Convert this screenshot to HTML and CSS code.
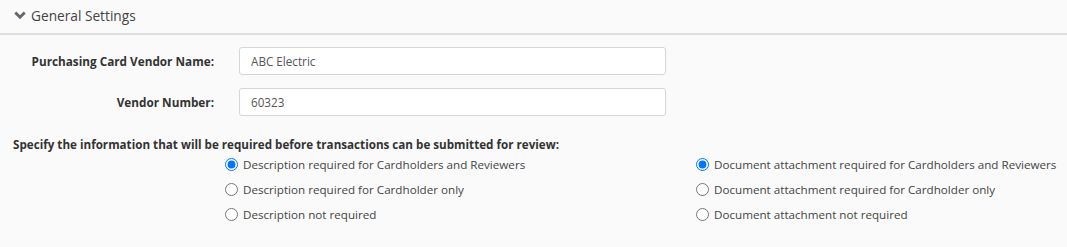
FILE: index.html
```html
<!DOCTYPE html>
<html>
<head>
<meta charset="utf-8">
<link rel="stylesheet" href="styles.css">
</head>
<body>
<div class="panel">
  <div class="panel-header">
    <svg class="chev" width="12" height="9" viewBox="0 0 12 9"><path d="M1.3 1.6 L6 6.3 L10.7 1.6" fill="none" stroke="#666" stroke-width="2.8" stroke-linejoin="miter"/></svg>
    <span class="title">General Settings</span>
  </div>
  <div class="panel-body">
    <div class="field">
      <label class="field-label">Purchasing Card Vendor Name:</label>
      <input class="field-input" type="text" value="ABC Electric">
    </div>
    <div class="field">
      <label class="field-label">Vendor Number:</label>
      <input class="field-input" type="text" value="60323">
    </div>
    <div class="spec">Specify the information that will be required before transactions can be submitted for review:</div>
    <div class="options">
      <div class="opt-col">
        <label class="opt"><input type="radio" name="desc" checked><span>Description required for Cardholders and Reviewers</span></label>
        <label class="opt"><input type="radio" name="desc"><span>Description required for Cardholder only</span></label>
        <label class="opt"><input type="radio" name="desc"><span>Description not required</span></label>
      </div>
      <div class="opt-col">
        <label class="opt"><input type="radio" name="doc" checked><span>Document attachment required for Cardholders and Reviewers</span></label>
        <label class="opt"><input type="radio" name="doc"><span>Document attachment required for Cardholder only</span></label>
        <label class="opt"><input type="radio" name="doc"><span>Document attachment not required</span></label>
      </div>
    </div>
  </div>
</div>
</body>
</html>
```
FILE: styles.css
```css
html, body {
  margin: 0;
  padding: 0;
  background: #fafafa;
  font-family: "Open Sans", "Liberation Sans", sans-serif;
  color: #333;
}
.panel-header {
  display: flex;
  align-items: center;
  padding-left: 14px;
  box-sizing: border-box;
  height: 35px;
  border-bottom: 2px solid #dedede;
}
.chev {
  margin-right: 5px;
  margin-top: -2px;
}
.title {
  font-size: 13.7px;
  color: #444;
  margin-top: -2px;
}
.panel-body {
  padding-top: 12px;
}
.field {
  display: flex;
  align-items: center;
  margin-bottom: 13px;
}
.field-label {
  width: 239px;
  text-align: right;
  font-weight: bold;
  font-size: 11.75px;
  color: #333;
  padding-right: 25px;
  box-sizing: border-box;
}
.field-input {
  width: 427px;
  height: 28px;
  box-sizing: border-box;
  border: 1px solid #d6d6d6;
  border-radius: 3px;
  background: #fff;
  padding: 0 11px;
  font-family: "Open Sans", "Liberation Sans", sans-serif;
  font-size: 11.7px;
  color: #555;
  margin: 0;
}
.spec {
  font-weight: bold;
  font-size: 11.65px;
  color: #333;
  padding-left: 13px;
  margin-top: 21px;
}
.options {
  display: grid;
  grid-template-columns: 471px auto;
  padding-left: 220px;
  margin-top: 0;
}
.opt-col {
  display: flex;
  flex-direction: column;
}
.opt {
  display: flex;
  align-items: center;
  height: 25px;
  font-size: 11.65px;
  color: #444;
}
.opt input {
  margin: 0 5px 0 5px;
  width: 13px;
  height: 13px;
}
```
